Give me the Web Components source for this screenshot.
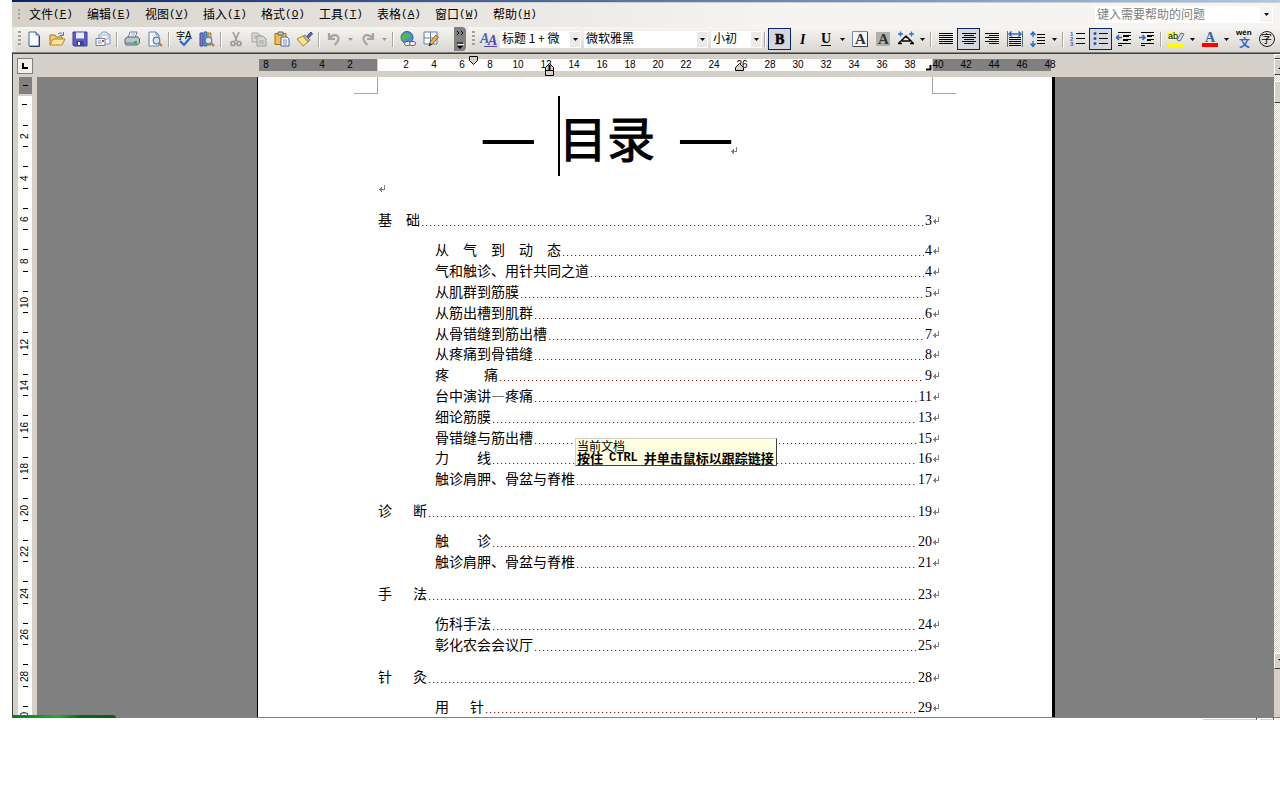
<!DOCTYPE html>
<html lang="zh-CN">
<head>
<meta charset="utf-8">
<title>目录</title>
<style>
  body { margin: 0; background: #fff; overflow-x: hidden; }
</style>
</head>
<body>
<word-window></word-window>

<script>
const UI = '"Noto Sans CJK SC", sans-serif';

function define(name, html, setup) {
  const tpl = document.createElement('template');
  tpl.innerHTML = html;
  customElements.define(name, class extends HTMLElement {
    constructor() {
      super();
      this.attachShadow({ mode: 'open' }).append(tpl.content.cloneNode(true));
    }
    connectedCallback() {
      if (setup && !this.ready) { this.ready = true; setup(this, this.shadowRoot); }
    }
  });
}

const mag = '<circle cx="9.5" cy="9.5" r="3.3" fill="#cfe6f7" stroke="#5d7ea6" stroke-width="1.2"/><path d="M12 12l3 3" stroke="#c9782d" stroke-width="2.2"/>';
const lines = (rows) => '<path shape-rendering="crispEdges" stroke="#000" d="' + rows.map(([a, b, y]) => `M${a} ${y}.5H${b}`).join('') + '"/>';
const ICONS = {
  new: '<path d="M3 1h7l3 3v11H3z" fill="#f6faff" stroke="#4a6496"/><path d="M10 1v3h3" fill="#bcd0ea" stroke="#4a6496"/><path d="M13.5 5v10.500H4" fill="none" stroke="#2b3f6b"/>',
  open: '<path d="M1 14V4h5l1 2h6v3" fill="#f4cf73" stroke="#a47722"/><path d="M1 14l3-6h12l-3 6z" fill="#ffe39a" stroke="#b5842a"/><path d="M9 3c2-2 4-1 5 1M14.500 1v3.500H11" fill="none" stroke="#5a7cae"/>',
  save: '<path d="M1 1h14v14H2l-1-1z" fill="#5a5fc8" stroke="#3a3c94"/><path d="M4 1.500h8v6H4z" fill="#e8edfb"/><path d="M4.500 10h7v5h-7z" fill="#3b3f9a"/><path d="M6 11h2v3H6z" fill="#fff"/>',
  mail: '<path d="M4 7V4l4-3h3l4 3v9H8" fill="#eef3fb" stroke="#7d94bd"/><path d="M6 4h7v4H6z" fill="#fff" stroke="#9fb0cf"/><path d="M1 7.500h9v7H1z" fill="#f8fbff" stroke="#6b82ad"/><path d="M3 10h3M3 12h4" stroke="#7d94bd"/><path d="M7 9h2v2H7z" fill="#e0412b"/>',
  print: '<path d="M6 1h7l-2 6H4z" fill="#fff" stroke="#62809a"/><path d="M1 8l2-2h11l1.500 2v4L13 14H2l-1-2z" fill="#b9c6cf" stroke="#4d6475"/><path d="M2 12h9" stroke="#5c7180"/><path d="M10 10h3v3h-3z" fill="#1fc51f"/><path d="M7 3h4M6.500 5h4" stroke="#98aab8"/>',
  preview: '<path d="M2 1h7l3 3v11H2z" fill="#f6faff" stroke="#6a80a8"/><path d="M9 1v3h3" fill="none" stroke="#6a80a8"/>' + mag,
  spell: '<text x="0" y="8" font-size="9" font-family="Noto Sans CJK SC">字</text><text x="9" y="8" font-size="10" font-family="Liberation Sans">A</text><path d="M4 10l4 4 6-7" fill="none" stroke="#2b68c8" stroke-width="2.200"/>',
  research: '<path d="M1 2h3v13H1z" fill="#7d79d8" stroke="#45449a"/><path d="M5 1h3v14H5z" fill="#6a9ad8" stroke="#35609a"/><path d="M9 2h3v12H9z" fill="#f0c060" stroke="#a8772c"/>' + mag,
  cut: '<path d="M5 1l4 9M11 1L7 10" stroke="#9a9a9a" stroke-width="1.600"/><circle cx="5" cy="12.500" r="2" fill="none" stroke="#9a9a9a" stroke-width="1.700"/><circle cx="11" cy="12.500" r="2" fill="none" stroke="#9a9a9a" stroke-width="1.700"/>',
  copy: '<path d="M1 2h6l2 2v7H1z" fill="#ddd" stroke="#a3a3a3"/><path d="M6 5h6l3 3v7H6z" fill="#d4d4d4" stroke="#9a9a9a"/><path d="M3 5h4M3 7h2M8 10h5M8 12h5" stroke="#a3a3a3"/>',
  paste: '<path d="M1 2.500h11v11H1z" fill="#f2bd4b" stroke="#a3731b"/><path d="M4 1h5v3H4z" fill="#ccc" stroke="#666"/><path d="M7 6h6l2 2v7H7z" fill="#fff" stroke="#4865a3"/><path d="M9 9h4M9 11h4M9 13h4" stroke="#6d8bc8"/>',
  format: '<path d="M10 5l4-4 1.500 2-4 4z" fill="#6468b0" stroke="#444a8c"/><path d="M8 4l5 5-2 2-6-5z" fill="#b4b4b4" stroke="#777"/><path d="M6 5L0 8l6 7 5-4z" fill="#f7e488" stroke="#a8872f"/>',
  undo: '<path d="M3 2v6h6M3.500 7.500C6 3 13 3 12.500 8c-.3 3-2 4-4 6" fill="none" stroke="#a5a5a5" stroke-width="2.200"/>',
  redo: '<path d="M13 2v6H7M12.500 7.500C10 3 3 3 3.500 8c.3 3 2 4 4 6" fill="none" stroke="#a5a5a5" stroke-width="2.200"/>',
  link: '<circle cx="7" cy="6.500" r="6" fill="#4c8fd6" stroke="#2b5f9e"/><path d="M3 3l4-1 3 2-1 3-4 1-2 3-2-4z" fill="#55b847"/><rect x="4.500" y="10.500" width="6" height="4" rx="2" fill="#eee" stroke="#555c78"/><rect x="9.500" y="10.500" width="6" height="4" rx="2" fill="#eee" stroke="#555c78"/>',
  draw: '<path d="M1 1h13v12H1zM1 7h13M7.500 1v12" fill="#fff" stroke="#5b7cb8"/><path d="M6 15l1-4 6-7 2.500 2-6 7z" fill="#f0b14d" stroke="#8a5a24"/><path d="M6 15l1-3 2 1.500z" fill="#222"/>',
  style: '<text x="-1" y="12" font-size="14" font-style="italic" font-weight="bold" font-family="Liberation Serif" fill="#3a6ec0">A</text><text x="7" y="14" font-size="14" font-style="italic" font-weight="bold" font-family="Liberation Serif" fill="#5546a8">A</text><path d="M3 15.500h13" stroke="#5546a8"/>',
  bold: '<text x="3" y="13" font-size="14" font-weight="bold" font-family="Liberation Serif" stroke="#000" stroke-width=".6">B</text>',
  italic: '<text x="5" y="13" font-size="14" font-style="italic" font-weight="bold" font-family="Liberation Serif">I</text>',
  underline: '<text x="3" y="12" font-size="14" font-weight="bold" font-family="Liberation Serif">U</text><path d="M3 14.500h10" stroke="#000"/>',
  border: '<path d="M.5.5h15v15H.5z" fill="#f6f6f4" stroke="#6e8db5"/><path d="M15.500 1v14.500H1" fill="none" stroke="#444"/><text x="3" y="13" font-size="15" font-weight="bold" font-family="Liberation Serif" fill="#333">A</text>',
  shade: '<path d="M1 1h14v14H1z" fill="#b0b0b0"/><text x="3" y="13" font-size="15" font-weight="bold" font-family="Liberation Serif" fill="#333">A</text>',
  scale: '<path d="M0 3h5M2.500.5v5M11 3h5M13.500.5v5" stroke="#2b6fe0" stroke-width="1.300"/><path d="M1 12L8 5l7 7M4 10h8M0 12.500h4M12 12.500h4" fill="none" stroke="#000" stroke-width="1.500"/>',
  justify: lines([[1,15,2],[1,15,4],[1,15,6],[1,15,8],[1,15,10],[1,15,12]]),
  center: lines([[1,15,2],[3,13,4],[1,15,6],[3,13,8],[1,15,10],[3,13,12]]),
  right: lines([[1,15,2],[5,15,4],[1,15,6],[5,15,8],[1,15,10],[5,15,12]]),
  distribute: '<path d="M.5 0v16M15.500 0v16" stroke="#5c7080"/><path d="M2 3h12M4.500.5L2 3l2.500 2.500M11.500.5L14 3l-2.500 2.500" fill="none" stroke="#2b68c8" stroke-width="1.500"/>' + lines([[2,14,6],[2,14,8],[2,14,10],[2,14,12],[2,14,14]]),
  spacing: '<path d="M3 1v5M.5 4L3 1l2.500 3M3 10v5M.5 12.500L3 15.500l2.500-3" fill="none" stroke="#2b68c8" stroke-width="1.400"/>' + lines([[7,15,3],[7,15,6],[7,15,9],[7,15,12]]),
  numbering: '<g font-size="6" font-weight="bold" font-family="Liberation Sans" fill="#2b68c8"><text x="0" y="5">1</text><text x="0" y="10">2</text><text x="0" y="15">3</text></g>' + lines([[6,15,2],[6,15,7],[6,15,12]]),
  bullets: '<g fill="#2b4fa8"><circle cx="2" cy="2.500" r="1.500"/><circle cx="2" cy="7.500" r="1.500"/><circle cx="2" cy="12.500" r="1.500"/></g>' + lines([[6,15,2],[6,15,7],[6,15,12]]),
  dedent: '<path d="M0 6.500h6M3 4L.5 6.500 3 9" fill="none" stroke="#2b68c8" stroke-width="1.500"/>' + lines([[2,15,1],[7,15,4],[7,13,5],[7,15,8],[7,12,9],[2,15,12],[2,6,14]]),
  indent: '<path d="M0 6.500h6M3.500 4L6 6.500 3.500 9" fill="none" stroke="#2b68c8" stroke-width="1.500"/>' + lines([[2,15,1],[8,15,4],[8,13,5],[8,15,8],[8,12,9],[2,15,12],[2,6,14]]),
  highlight: '<path d="M0 0h9v9H0z" fill="#ffff66"/><text x="0" y="8" font-size="9" font-family="Liberation Sans">ab</text><path d="M9 9l4-7 3 1-4 7z" fill="#cfe0f5" stroke="#55739c"/><path d="M0 12h16v4H0z" fill="#ff0"/>',
  color: '<text x="3" y="11" font-size="14" font-weight="bold" font-family="Liberation Serif" fill="#3a62a8">A</text><path d="M0 12h16v4H0z" fill="red"/>',
  pinyin: '<text x="0" y="4" font-size="8" font-weight="bold" font-family="Liberation Sans">wén</text><text x="3" y="16" font-size="11" font-weight="bold" font-family="Noto Sans CJK SC" fill="#3c62cc">文</text>',
  enclose: '<circle cx="8" cy="8" r="7.500" fill="none" stroke="#222"/><text x="2" y="12" font-size="11" font-family="Noto Sans CJK SC">字</text>'
};

/* One menu title with its access key */
define('menu-item', `
<style>
  :host { display: block; }
  button { border: 0; padding: 0; background: none; display: flex; width: 42px; font: 12px/20px ${UI}; color: #000; white-space: nowrap; }
  span { font: 11px/20px "Liberation Mono", monospace; }
</style>
<button type="button"><slot></slot><span>(<u></u>)</span></button>`, (el, root) => {
  root.querySelector('u').textContent = el.getAttribute('key');
});

define('drag-grip', `
<style>
  :host { display: block; flex: none; width: 3px; height: 16px;
    background: repeating-linear-gradient(#a5a29a 0 2px, transparent 2px 4px); }
</style>`);

define('menu-bar', `
<style>
  :host { display: flex; align-items: center; box-sizing: border-box; height: 24px; padding: 0 0 2px 6px;
    background: linear-gradient(90deg, #d6d2ca, #f5f4f2 60%); }
  drag-grip { height: 10px; width: 2px; margin-right: 9px; }
  nav { display: flex; gap: 16px; flex: 1; }
  .ask { display: flex; width: 178px; background: #fff; margin-right: 7px; }
  input { flex: 1; min-width: 0; border: 0; padding: 0 2px 2px; box-sizing: border-box; background: none; font: 12px/15px ${UI}; height: 17px; }
  input::placeholder { color: #808080; opacity: 1; }
  button { width: 14px; padding: 0; background: #f5f4f2; border: 1px solid #fff; box-sizing: border-box; }
  svg { display: block; margin: auto; }
</style>
<drag-grip></drag-grip>
<nav aria-label="菜单">
  <menu-item key="F">文件</menu-item><menu-item key="E">编辑</menu-item><menu-item key="V">视图</menu-item>
  <menu-item key="I">插入</menu-item><menu-item key="O">格式</menu-item><menu-item key="T">工具</menu-item>
  <menu-item key="A">表格</menu-item><menu-item key="W">窗口</menu-item><menu-item key="H">帮助</menu-item>
</nav>
<div class="ask">
  <input type="text" placeholder="键入需要帮助的问题" aria-label="键入需要帮助的问题">
  <button type="button" aria-label="展开"><svg width="5" height="3"><path d="M0 0h5L2.500 3z"/></svg></button>
</div>`);

define('tool-button', `
<style>
  :host { display: block; flex: none; }
  button { display: block; box-sizing: border-box; width: 23px; height: 22px; padding: 2px; border: 1px solid transparent; background: none; }
  :host([on]) button { border-color: #0a246a; background: #d5d7de; }
  svg { display: block; margin: auto; overflow: visible; }
</style>
<button type="button"></button>`, (el, root) => {
  const b = root.querySelector('button');
  const id = el.getAttribute('icon');
  b.setAttribute('aria-label', id);
  b.innerHTML = `<svg width="16" height="16" viewBox="0 0 16 16">${ICONS[id]}</svg>`;
});

define('drop-arrow', `
<style>
  :host { display: block; flex: none; }
  button { display: block; width: 11px; height: 22px; padding: 0; border: 0; background: none; color: #000; }
  :host([dim]) button { color: #9a9a9a; }
  svg { display: block; margin: auto; }
</style>
<button type="button" aria-label="更多"><svg width="5" height="3"><path d="M0 0h5L2.500 3z" fill="currentColor"/></svg></button>`);

define('tool-gap', `
<style>
  :host { display: block; flex: none; width: 1px; height: 15px; margin: 0 3px 0 2px; background: #a9a69d; box-shadow: 1px 1px #fff; }
</style>`);

define('combo-box', `
<style>
  :host { display: flex; flex: none; position: relative; height: 17px; background: #fff; }
  select { appearance: none; box-sizing: border-box; width: 100%; border: 0; padding: 0 11px 3px 2px; margin: 0; background: none; color: #000; font: 12px/14px ${UI}; height: 17px; }
  i { position: absolute; right: 1px; top: 1px; bottom: 1px; width: 10px; background: #eceae6; display: grid; place-items: center; pointer-events: none; }
</style>
<select></select><i><svg width="5" height="3"><path d="M0 0h5L2.500 3z"/></svg></i>`, (el, root) => {
  const s = root.querySelector('select');
  s.setAttribute('aria-label', el.getAttribute('label'));
  s.add(new Option(el.getAttribute('value')));
});

define('tool-bar', `
<style>
  :host { display: flex; height: 25px; background: #e9e7e2; border-bottom: 1px solid #84847c; }
  div { display: flex; align-items: center; box-sizing: border-box; padding-bottom: 1px; }
  .std { width: 451px; flex: none; margin-left: 3px; border-radius: 4px 0 0 4px; background: linear-gradient(#f6f5f3, #d9d6ce); padding-left: 3px; }
  .std drag-grip { margin-right: 1px; }
  .more { margin-left: auto; width: 12px; height: 24px; padding: 0; border: 0; border-radius: 0 4px 4px 0; background: #808080; }
  .more svg { display: block; }
  .fmt { flex: 1; min-width: 0; overflow: hidden; background: linear-gradient(#f6f5f3, #d9d6ce); margin-left: 1px; padding-left: 5px; border-radius: 4px 0 0 4px; }
  .fmt drag-grip { margin-right: 2px; }
  combo-box { margin-right: 3px; }
  .style { width: 81px; } .face { width: 124px; } .size { width: 51px; margin-right: 0; }
</style>
<div class="std" role="toolbar" aria-label="常用">
  <drag-grip></drag-grip>
  <tool-button icon="new"></tool-button><tool-button icon="open"></tool-button><tool-button icon="save"></tool-button><tool-button icon="mail"></tool-button>
  <tool-gap></tool-gap>
  <tool-button icon="print"></tool-button><tool-button icon="preview"></tool-button>
  <tool-gap></tool-gap>
  <tool-button icon="spell"></tool-button><tool-button icon="research"></tool-button>
  <tool-gap></tool-gap>
  <tool-button icon="cut"></tool-button><tool-button icon="copy"></tool-button><tool-button icon="paste"></tool-button><tool-button icon="format"></tool-button>
  <tool-gap></tool-gap>
  <tool-button icon="undo"></tool-button><drop-arrow dim></drop-arrow><tool-button icon="redo"></tool-button><drop-arrow dim></drop-arrow>
  <tool-gap></tool-gap>
  <tool-button icon="link"></tool-button><tool-button icon="draw"></tool-button>
  <button class="more" type="button" aria-label="工具栏选项"><svg width="12" height="24"><path d="M3 4l2 2-2 2M7 4l2 2-2 2" fill="none" stroke="#000"/><path d="M3 16h6" stroke="#000"/><path d="M3 19h6l-3 3z"/><path d="M4 17.500h6" stroke="#fff"/></svg></button>
</div>
<div class="fmt" role="toolbar" aria-label="格式">
  <drag-grip></drag-grip>
  <tool-button icon="style"></tool-button>
  <combo-box class="style" label="样式" value="标题 1 + 微"></combo-box>
  <combo-box class="face" label="字体" value="微软雅黑"></combo-box>
  <combo-box class="size" label="字号" value="小初"></combo-box>
  <tool-gap></tool-gap>
  <tool-button icon="bold" on></tool-button><tool-button icon="italic"></tool-button><tool-button icon="underline"></tool-button><drop-arrow></drop-arrow>
  <tool-button icon="border"></tool-button><tool-button icon="shade"></tool-button><tool-button icon="scale"></tool-button><drop-arrow></drop-arrow>
  <tool-gap></tool-gap>
  <tool-button icon="justify"></tool-button><tool-button icon="center" on></tool-button><tool-button icon="right"></tool-button><tool-button icon="distribute"></tool-button><tool-button icon="spacing"></tool-button><drop-arrow></drop-arrow>
  <tool-gap></tool-gap>
  <tool-button icon="numbering"></tool-button><tool-button icon="bullets" on></tool-button><tool-button icon="dedent"></tool-button><tool-button icon="indent"></tool-button>
  <tool-gap></tool-gap>
  <tool-button icon="highlight"></tool-button><drop-arrow></drop-arrow><tool-button icon="color"></tool-button><drop-arrow></drop-arrow>
  <tool-button icon="pinyin"></tool-button><tool-button icon="enclose"></tool-button>
</div>`);

/* Horizontal ruler: margin bands, numbers and the indent markers above them */
define('page-ruler', `
<style>
  :host { display: grid; box-sizing: border-box; grid-template-columns: 792px; justify-content: center; align-content: center; height: 23px; padding: 0 1px 1px 0; font: 10px/12px "Liberation Sans", sans-serif; color: #000; position: relative; z-index: 1; }
  .strip { display: grid; position: relative; height: 12px; }
  .bands, .nums { grid-area: 1 / 1; display: flex; min-width: 0; }
  .bands { gap: 1px; }
  .bands i { width: 118px; background: #808080; }
  .bands i:nth-child(2) { flex: 1; background: #fff; }
  .nums { margin: 0 -14px 0 -7px; }
  .nums span { flex: none; width: 28px; text-align: center; }
  svg { position: absolute; overflow: visible; }
</style>
<div class="strip">
  <div class="bands"><i></i><i></i><i></i></div>
  <div class="nums"></div>
  <svg style="left:210px;top:-3px" width="9" height="9"><path d="M.5.5h8v4l-4 4-4-4z" fill="#d4d0c8" stroke="#000"/></svg>
  <svg style="left:286px;top:4px" width="9" height="14"><path d="M.5 7.500v-3l4-4 4 4v3zM.5 7.500h8v5h-8z" fill="#d4d0c8" stroke="#000"/><path d="M4.500 2v5" stroke="#000" stroke-width="2"/></svg>
  <svg style="left:476px;top:4px" width="9" height="9"><path d="M.5 7.500v-3l4-4 4 4v3z" fill="#d4d0c8" stroke="#000"/></svg>
  <svg style="left:667px;top:6px" width="6" height="6"><path d="M0 4.500h4.500V0" fill="none" stroke="#000" stroke-width="2"/></svg>
</div>`, (el, root) => {
  const box = root.querySelector('.nums');
  for (let n = -8; n <= 48; n += 2) {
    const s = document.createElement('span');
    s.textContent = n ? Math.abs(n) : '';
    box.append(s);
  }
});

/* Vertical ruler: fills its column, numbers turned to read upwards */
define('side-ruler', `
<style>
  :host { display: block; contain: size; overflow: hidden; width: 14px; font: 10px/14px "Liberation Sans", sans-serif; color: #000; }
  .margin { display: grid; place-items: center; height: 17px; margin-left: 1px; width: 13px; background: #808080; border-bottom: 2px solid #d4d0c8; box-sizing: content-box; }
  .scale { display: grid; grid-auto-rows: 41px 42px; background: #fff; padding-top: 19px; position: relative; }
  b { display: block; width: 5px; height: 1px; background: #000; }
  .first { position: absolute; left: 4px; top: 8px; }
  .cell { display: flex; flex-direction: column; align-items: center; justify-content: space-between; padding: 10px 1px 9px 0; }
  .cell span { writing-mode: vertical-rl; transform: rotate(180deg); height: 14px; width: 14px; text-align: center; }
</style>
<div class="margin"><b></b></div>
<div class="scale"><b class="first"></b></div>`, (el, root) => {
  const box = root.querySelector('.scale');
  for (let n = 2; n <= 30; n += 2) {
    const c = document.createElement('div');
    c.className = 'cell';
    c.innerHTML = `<b></b><span>${n}</span><b></b>`;
    box.append(c);
  }
});

define('return-mark', `
<style>:host { display: block; flex: none; width: 8px; height: 7px; } svg { display: block; }</style>
<svg width="8" height="7" shape-rendering="crispEdges"><path d="M6.500 0v4.500H1M3.500 2v5M2.500 3v3" fill="none" stroke="#808080"/></svg>`);

define('toc-entry', `
<style>
  :host { display: block; min-width: 0; }
  a { display: flex; align-items: center; height: 21px; color: #000; text-decoration: none; margin-right: -8px; }
  .t { white-space: pre; font: 14px/18px ${UI}; margin-bottom: 3px; }
  .n { font: 14px/20px "Liberation Serif", serif; }
  .dots { flex: 1; height: 1px; margin: 9px 1px 0 2px; background: repeating-linear-gradient(90deg, #7d2020 0 1px, #e8cfc8 1px 2px, transparent 2px 4px); }
</style>
<a href="#"><span class="t"><slot></slot></span><span class="dots"></span><span class="n"></span><return-mark></return-mark></a>`, (el, root) => {
  root.querySelector('.n').textContent = el.getAttribute('page');
});

define('toc-section', `
<style>
  :host { display: block; margin-bottom: 11px; }
  :host(:last-child) { margin-bottom: 0; }
  .rows { display: grid; grid-auto-rows: 21px 21px 21px 21px 20px; margin: 9px 0 0 57px; }
</style>
<slot name="head"></slot>
<div class="rows"><slot></slot></div>`);

define('screen-tip', `
<style>
  :host { display: block; box-sizing: border-box; width: 202px; padding: 1px; background: #ffffe1; border: 1px solid #d4d0c8; border-right-color: #404040; border-bottom-color: #404040; font: 12px/12px ${UI}; color: #000; white-space: nowrap; }
  strong { display: flex; align-items: center; height: 12px; font-size: 13px; }
  kbd { font: bold 12px/14px "Liberation Mono", monospace; margin: 0 6px; }
</style>
当前文档<strong>按住<kbd>CTRL</kbd>并单击鼠标以跟踪链接</strong>`);

define('doc-page', `
<style>
  :host { display: block; position: relative; box-sizing: border-box; width: 798px; margin: 0 auto -1px; padding: 19px 120px 0; background: #fff; border-left: 1px solid #000; border-right: 3px solid #000; }
  :host::before, :host::after { content: ""; position: absolute; top: 0; width: 23px; height: 16px; border: solid #a5a5a5; border-width: 0 1px 1px 0; }
  :host::before { left: 96px; }
  :host::after { right: 96px; border-width: 0 0 1px 1px; }
  h1 { display: flex; justify-content: center; gap: 22px; margin: 0 92px 0 0; height: 80px; align-items: center; font: 400 48px/80px ${UI}; color: #000; -webkit-text-stroke: 1px #000; }
  .dash { font-size: 64px; -webkit-text-stroke: 0; margin-bottom: 8px; }
  h1 return-mark { margin: 28px 0 0 -26px; }
  .word { display: flex; }
  .word::before { content: ""; width: 2px; margin: 0 -1px; background: #000; }
  .blank { display: flex; align-items: center; height: 24px; margin-bottom: 10px; }
  nav { display: block; }
  screen-tip { position: absolute; left: 317px; top: 361px; }
</style>
<h1><span class="dash">—</span><span class="word">目录</span><span class="dash">—</span><return-mark></return-mark></h1>
<div class="blank"><return-mark></return-mark></div>
<nav aria-label="目录">
  <toc-section>
    <toc-entry slot="head" page="3">基　础</toc-entry>
    <toc-entry page="4">从　气　到　动　态</toc-entry>
    <toc-entry page="4">气和触诊、用针共同之道</toc-entry>
    <toc-entry page="5">从肌群到筋膜</toc-entry>
    <toc-entry page="6">从筋出槽到肌群</toc-entry>
    <toc-entry page="7">从骨错缝到筋出槽</toc-entry>
    <toc-entry page="8">从疼痛到骨错缝</toc-entry>
    <toc-entry page="9">疼　　&#x2002;痛</toc-entry>
    <toc-entry page="11">台中演讲—疼痛</toc-entry>
    <toc-entry page="13">细论筋膜</toc-entry>
    <toc-entry page="15">骨错缝与筋出槽</toc-entry>
    <toc-entry page="16">力　　线</toc-entry>
    <toc-entry page="17">触诊肩胛、骨盆与脊椎</toc-entry>
  </toc-section>
  <toc-section>
    <toc-entry slot="head" page="19">诊　&#x2002;断</toc-entry>
    <toc-entry page="20">触　　诊</toc-entry>
    <toc-entry page="21">触诊肩胛、骨盆与脊椎</toc-entry>
  </toc-section>
  <toc-section>
    <toc-entry slot="head" page="23">手　&#x2002;法</toc-entry>
    <toc-entry page="24">伤科手法</toc-entry>
    <toc-entry page="25">彰化农会会议厅</toc-entry>
  </toc-section>
  <toc-section>
    <toc-entry slot="head" page="28">针　&#x2002;灸</toc-entry>
    <toc-entry page="29">用　&#x2002;针</toc-entry>
  </toc-section>
</nav>
<screen-tip role="tooltip"></screen-tip>`);

/* Scroll bar that runs past the right edge of the screen */
define('scroll-column', `
<style>
  :host { display: flex; flex-direction: column; width: 6px; overflow: hidden; background: #d4d0c8; }
  button { flex: none; box-sizing: border-box; width: 17px; height: 16px; padding: 0; background: #d4d0c8; border: 1px solid #404040; border-color: #fff #404040 #404040 #fff; }
  button svg { display: block; margin: auto; }
  .split { height: 5px; }
  .track { flex: 1; width: 17px; padding-top: 6px; background: repeating-conic-gradient(#d4d0c8 0 25%, #fff 0 50%) 0 0 / 2px 2px; }
  .thumb { display: block; height: 22px; }
  .nav { height: 48px; width: 17px; display: flex; align-items: center; justify-content: center; }
</style>
<button class="split" type="button" aria-label="拆分"></button>
<button type="button" aria-label="向上"><svg width="9" height="4"><path d="M0 4h9L4.500 0z"/></svg></button>
<div class="track"><button class="thumb" type="button" aria-label="滚动"></button></div>
<button type="button" aria-label="向下"><svg width="9" height="4"><path d="M0 0h9L4.500 4z"/></svg></button>
<div class="nav"><svg width="8" height="6"><circle cx="4" cy="3" r="3"/></svg></div>`);

define('word-window', `
<style>
  :host { display: block; margin-left: 12px; position: relative; overflow: hidden; }
  .title { height: 2px; background: linear-gradient(90deg, #0a246a, #a6caf0); border-bottom: 1px solid #d4d0c8; }
  main { display: grid; grid-template-columns: 19px 5px minmax(0, 1fr) 6px; grid-template-rows: 23px auto; border: solid #404040; border-width: 1px 0 0 1px; outline: 1px solid #808080; background: #d4d0c8; }
  .tab { grid-column: 1 / 3; justify-self: start; align-self: center; box-sizing: border-box; width: 16px; height: 16px; margin-left: 4px; padding: 0; border: 1px solid #808080; background: #f2f0ec; }
  .tab svg { display: block; margin: auto; }
  side-ruler { margin-left: 5px; }
  .desk { grid-column: 3; background: #808080; overflow: hidden; padding-left: 1px; }
  scroll-column { grid-column: 4; grid-row: 1 / 3; }
  footer { display: flex; justify-content: flex-end; gap: 3px; height: 2px; padding-right: 6px; border-top: 1px solid #d4d0c8; background: #fff; }
  footer i { width: 14px; border-right: 1px solid #404040; border-bottom: 1px solid #d4d0c8; box-sizing: border-box; height: 2px; }
  footer i:first-child { width: 54px; }
  .start { position: absolute; left: 0; bottom: 2px; width: 104px; height: 3px; background: linear-gradient(90deg, #0a7a1c, #1eae30 45%, #0a6a14 65%, #08600f); border-top-right-radius: 3px; }
</style>
<div class="title"></div>
<menu-bar></menu-bar>
<tool-bar></tool-bar>
<main>
  <button class="tab" type="button" aria-label="制表符"><svg width="8" height="8"><path d="M2 1v5h5" fill="none" stroke="#000" stroke-width="2"/></svg></button>
  <page-ruler></page-ruler>
  <side-ruler></side-ruler><span></span>
  <div class="desk"><doc-page></doc-page></div>
  <scroll-column></scroll-column>
</main>
<footer><i></i><i></i></footer>
<div class="start"></div>`);
</script>
</body>
</html>
